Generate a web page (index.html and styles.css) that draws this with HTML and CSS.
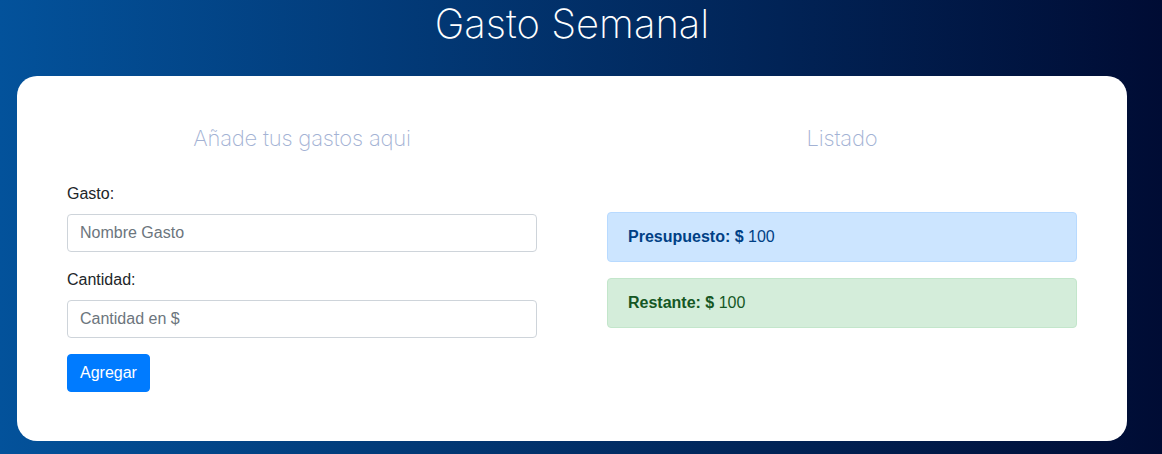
FILE: index.html
```html
<!DOCTYPE html>
<html lang="es">
<head>
<meta charset="utf-8">
<title>Gasto Semanal</title>
<link rel="stylesheet" href="styles.css">
</head>
<body>
<div class="page">
  <h1 class="title">Gasto Semanal</h1>
  <div class="card">
    <div class="col">
      <h2 class="subtitle">Añade tus gastos aqui</h2>
      <form class="form">
        <div class="group">
          <label class="label">Gasto:</label>
          <input class="input" type="text" placeholder="Nombre Gasto">
        </div>
        <div class="group">
          <label class="label">Cantidad:</label>
          <input class="input" type="text" placeholder="Cantidad en $">
        </div>
        <button class="btn" type="button">Agregar</button>
      </form>
    </div>
    <div class="col">
      <h2 class="subtitle">Listado</h2>
      <div class="list">
        <div class="alert alert-primary"><b>Presupuesto: $</b> 100</div>
        <div class="alert alert-success"><b>Restante: $</b> 100</div>
      </div>
    </div>
  </div>
</div>
</body>
</html>
```
FILE: styles.css
```css
html, body {
  margin: 0;
  height: 100%;
}
body {
  background: linear-gradient(90deg, #03529b 0%, #000c34 100%);
  font-family: "Liberation Sans", Arial, sans-serif;
  color: #212529;
  font-size: 16px;
}
.page {
  width: 1110px;
  margin-left: 17px;
}
.title {
  margin: 0 0 28px;
  font-family: Inter, "Open Sans", sans-serif;
  font-weight: 200;
  font-size: 40px;
  line-height: 48px;
  color: #fff;
  text-align: center;
}
.card {
  background: #fff;
  border-radius: 20px;
  padding: 48px 50px 49px;
  display: flex;
  gap: 70px;
}
.col {
  width: 470px;
}
.subtitle {
  margin: 0 0 29px;
  font-family: Inter, "Open Sans", sans-serif;
  font-weight: 200;
  font-size: 22px;
  letter-spacing: -0.2px;
  line-height: 29px;
  color: #a3b2d4;
  text-align: center;
}
.group {
  margin-bottom: 16px;
}
.label {
  display: block;
  line-height: 24px;
  margin-bottom: 8px;
}
.input {
  display: block;
  box-sizing: border-box;
  width: 100%;
  height: 38px;
  padding: 6px 12px;
  border: 1px solid #ced4da;
  border-radius: 4px;
  font-family: inherit;
  font-size: 16px;
  color: #495057;
}
.input::placeholder {
  color: #6c757d;
}
.btn {
  height: 38px;
  padding: 6px 12px;
  border: 1px solid #007bff;
  background: #007bff;
  color: #fff;
  border-radius: 4px;
  font-family: inherit;
  font-size: 16px;
  line-height: 24px;
}
.list {
  padding-top: 30px;
}
.alert {
  padding: 12px 20px;
  border: 1px solid transparent;
  border-radius: 4px;
  line-height: 24px;
  margin-bottom: 16px;
}
.alert-primary {
  background: #cce5ff;
  border-color: #b8daff;
  color: #004085;
}
.alert-success {
  background: #d4edda;
  border-color: #c3e6cb;
  color: #155724;
}
```
